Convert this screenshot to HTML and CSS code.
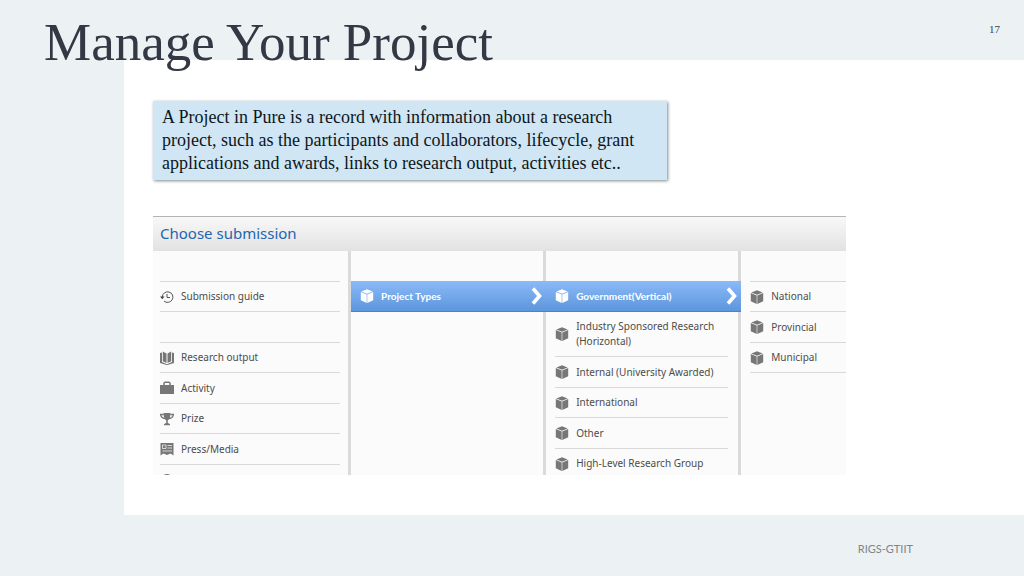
FILE: index.html
```
<!DOCTYPE html>
<html lang="en">
<head>
    <meta charset="UTF-8">
    <meta name="viewport" content="width=device-width, initial-scale=1.0">
    <title>Manage Your Project</title>
    <link rel="stylesheet" href="styles.css">
</head>
<body>
    <!-- shared icons -->
    <svg class="sprite" aria-hidden="true">
        <symbol id="cube" viewBox="0 0 14 14">
            <path fill="currentColor" d="M7 .3 12.600 2.500 7 4.800 1.400 2.500ZM.8 3.100 6.700 5.600V13.900L.8 11.200ZM13.200 3.100 7.300 5.600V13.900L13.200 11.200Z"/>
        </symbol>
        <symbol id="arrow" viewBox="0 0 12 18">
            <path fill="none" stroke="currentColor" stroke-width="3.600" d="M2 1.500 8.500 9 2 16.500"/>
        </symbol>
    </svg>
    <div class="slide">
        <header class="top">
            <h1>Manage Your Project</h1>
            <span class="page">17</span>
        </header>
        <main class="sheet">
            <p class="note">A Project in Pure is a record with information about a research project, such as the participants and collaborators, lifecycle, grant applications and awards, links to research output, activities etc..</p>
            <section class="chooser">
                <h2>Choose submission</h2>
                <div class="columns">
                    <ul class="column first">
                        <li></li>
                        <li><a href="#">
                            <svg class="icon" viewBox="0 0 14 14"><path fill="none" stroke="#555" d="M2.300 7A5.300 5.300 0 1 1 4 11M7 4V7.500H10"/><path fill="#444" d="M0 6.500H4.600L2.300 9.300Z"/></svg>
                            Submission guide</a></li>
                        <li></li>
                        <li><a href="#">
                            <svg class="icon" viewBox="0 0 14 14"><path fill="currentColor" d="M0 2 2 1.500V11L7 13.200 12 11V1.500L14 2V12L7.500 14H6.500L0 12ZM2.800 .5 6.500 2.500V12L2.800 10.300Z"/><path fill="currentColor" d="M11.200 .5 7.500 2.500V12L11.200 10.300Z"/></svg>
                            Research output</a></li>
                        <li><a href="#">
                            <svg class="icon" viewBox="0 0 14 14"><path fill="currentColor" d="M0 4H14V13H0Z"/><path fill="none" stroke="currentColor" stroke-width="1.500" d="M4 4V2L5 1.200H9L10 2V4"/></svg>
                            Activity</a></li>
                        <li><a href="#">
                            <svg class="icon" viewBox="0 0 14 14"><path fill="currentColor" d="M3.500 1H10.500C10.500 5 9.500 7.500 7.800 8.300V11L10 12V13.300H4V12L6.200 11V8.300C4.500 7.500 3.500 5 3.500 1Z"/><path fill="none" stroke="currentColor" stroke-width="1.300" d="M3.500 2.500H.6C.8 5 2.500 6.200 5 6.500M10.500 2.500H13.400C13.200 5 11.500 6.200 9 6.500"/></svg>
                            Prize</a></li>
                        <li><a href="#">
                            <svg class="icon" viewBox="0 0 14 14"><path fill="currentColor" d="M.5 1H13.500V13.500L10.500 11.500 7 13 3.500 11.500 .5 13.500Z"/><path fill="none" stroke="#fff" stroke-width=".7" d="M2.500 3H6V6.500H2.500ZM7.500 3.500H12M7.500 6H12M2.500 9H12"/></svg>
                            Press/Media</a></li>
                        <li><a href="#" aria-label="More">
                            <svg class="icon" viewBox="0 0 14 14"><circle cx="7" cy="7" r="6" fill="currentColor"/></svg></a></li>
                    </ul>
                    <ul class="column second">
                        <li></li>
                        <li class="selected"><a href="#"><svg class="icon"><use href="#cube"/></svg>Project Types<svg class="arrow"><use href="#arrow"/></svg></a></li>
                    </ul>
                    <ul class="column third">
                        <li></li>
                        <li class="selected"><a href="#"><svg class="icon"><use href="#cube"/></svg>Government(Vertical)<svg class="arrow"><use href="#arrow"/></svg></a></li>
                        <li class="tall"><a href="#"><svg class="icon"><use href="#cube"/></svg>Industry Sponsored Research (Horizontal)</a></li>
                        <li><a href="#"><svg class="icon"><use href="#cube"/></svg>Internal (University Awarded)</a></li>
                        <li><a href="#"><svg class="icon"><use href="#cube"/></svg>International</a></li>
                        <li><a href="#"><svg class="icon"><use href="#cube"/></svg>Other</a></li>
                        <li><a href="#"><svg class="icon"><use href="#cube"/></svg>High-Level Research Group</a></li>
                    </ul>
                    <ul class="column last">
                        <li></li>
                        <li><a href="#"><svg class="icon"><use href="#cube"/></svg>National</a></li>
                        <li><a href="#"><svg class="icon"><use href="#cube"/></svg>Provincial</a></li>
                        <li><a href="#"><svg class="icon"><use href="#cube"/></svg>Municipal</a></li>
                    </ul>
                </div>
            </section>
        </main>
        <footer class="bottom">RIGS-GTIIT</footer>
    </div>
</body>
</html>
```
FILE: styles.css
```
* {
  margin: 0;
  padding: 0;
  box-sizing: border-box;
}
body {
  background-color: #ecf1f4;
  font-family: 'Liberation Serif', serif;
}
.sprite {
  display: none;
}
.slide {
  display: grid;
  grid-template-columns: 124px 1fr;
  grid-template-rows: 60px 1fr 61px;
  min-height: 100vh;
}
/* the title hangs over the top edge of the sheet */
.top {
  grid-column: 1 / -1;
  grid-row: 1;
  z-index: 1;
  display: flex;
  justify-content: space-between;
  padding: 12px 24px 0 44px;
}
h1 {
  font-size: 53px;
  font-weight: 400;
  line-height: 60px;
  color: #343844;
}
.page {
  padding-top: 10px;
  font-size: 11px;
  line-height: 14px;
  color: #444;
}
.sheet {
  grid-column: 2;
  grid-row: 2;
  padding: 41px 0 40px 29px;
  background-color: #fff;
}
.note {
  width: 59%;
  margin-bottom: 36px;
  padding: 5px 9px;
  background-color: #d0e6f4;
  box-shadow: 1px 1px 3px #808890;
  font-size: 18px;
  line-height: 23px;
  color: #0c1620;
}
.chooser {
  width: 79.6%;
  border-top: 1px solid #b4b4b4;
  font-family: 'Noto Sans', sans-serif;
}
h2 {
  padding: 0 7px 2px;
  background: linear-gradient(#f8f8f8, #e2e2e2);
  font-size: 15px;
  font-weight: 400;
  line-height: 32px;
  color: #2265b0;
}
.columns {
  display: grid;
  grid-template-columns: 198fr 195fr 195fr 105fr;
  height: 224px;
  overflow: hidden;
  background-color: #fbfbfb;
}
.column {
  list-style: none;
  border-right: 3px solid #dadada;
  font-size: 10px;
  line-height: 15px;
  color: #4c4c4c;
}
.column li {
  height: 30px;
  border-bottom: 1px solid #d9d9d9;
}
.first li:nth-child(odd),
.last li:nth-child(odd),
.third li:nth-child(even) {
  height: 31px;
}
.column a {
  display: flex;
  align-items: center;
  gap: 7px;
  height: 100%;
  color: inherit;
  text-decoration: none;
}
.first {
  padding: 0 8px 0 7px;
}
.second li:first-child,
.third li:first-child {
  border-color: transparent;
}
.third {
  padding: 0 10px 0 9px;
}
.third .tall {
  height: 45px;
}
.last {
  padding-left: 9px;
  border-right: none;
}
.icon {
  flex: none;
  width: 14px;
  height: 14px;
  color: #777;
}
/* runs across the divider so the path reads as one bar */
.column .selected {
  height: 31px;
  margin-right: -3px;
  padding: 0 3px 0 9px;
  border-bottom-color: #4c84c8;
  background: linear-gradient(#8bbaf8, #5c96dc);
  font-family: Lato, sans-serif;
  font-weight: 700;
  color: #fff;
}
.third .selected {
  margin: 0 -13px 0 -9px;
}
.selected .icon {
  color: #fff;
}
.arrow {
  width: 12px;
  height: 18px;
  margin-left: auto;
}
.bottom {
  grid-column: 2;
  grid-row: 3;
  padding: 26px 111px 0 0;
  font-family: Lato, sans-serif;
  font-size: 11px;
  line-height: 16px;
  text-align: right;
  color: #7f8488;
}
```
